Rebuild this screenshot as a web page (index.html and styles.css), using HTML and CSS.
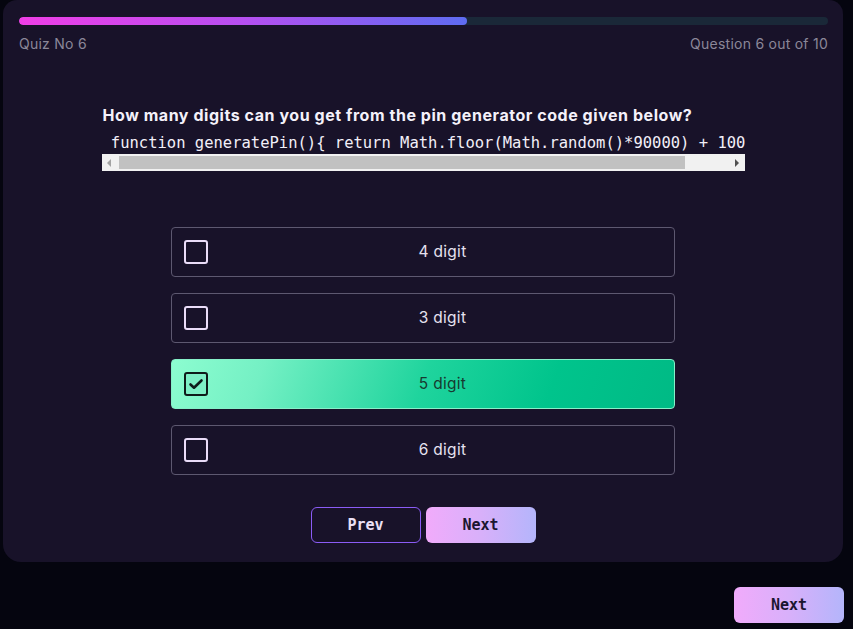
FILE: index.html
```html
<!DOCTYPE html>
<html lang="en">
<head>
<meta charset="utf-8">
<title>Quiz</title>
<link rel="stylesheet" href="styles.css">
</head>
<body>
<div class="page">
  <section class="card">
    <div class="progress"><div class="progress-fill" style="width: 55.4%"></div></div>
    <div class="meta">
      <span>Quiz No 6</span>
      <span>Question 6 out of 10</span>
    </div>
    <div class="question">
      <h2 class="q-title">How many digits can you get from the pin generator code given below?</h2>
      <div class="code-box">
        <pre class="code"> function generatePin(){ return Math.floor(Math.random()*90000) + 100</pre>
        <div class="scrollbar">
          <span class="arrow arrow-left"></span>
          <span class="track"><span class="thumb"></span></span>
          <span class="arrow arrow-right"></span>
        </div>
      </div>
    </div>
    <ul class="options">
      <li class="option"><span class="box"></span><span class="label">4 digit</span></li>
      <li class="option"><span class="box"></span><span class="label">3 digit</span></li>
      <li class="option selected"><span class="box"><svg viewBox="0 0 20 20" width="20" height="20"><path d="M4.5 10.5l3.5 3.2 7.5-7.2" fill="none" stroke="#0e1b1a" stroke-width="2.6" stroke-linecap="round" stroke-linejoin="round"/></svg></span><span class="label">5 digit</span></li>
      <li class="option"><span class="box"></span><span class="label">6 digit</span></li>
    </ul>
    <div class="nav">
      <button class="btn btn-outline">Prev</button>
      <button class="btn btn-fill">Next</button>
    </div>
  </section>
  <div class="footer">
    <button class="btn btn-fill">Next</button>
  </div>
</div>
</body>
</html>
```

FILE: styles.css
```css
* { box-sizing: border-box; }
html, body { margin: 0; padding: 0; }
body {
  background: #05050f;
  font-family: "Inter", "Noto Sans", sans-serif;
  width: 853px;
  height: 629px;
  overflow: hidden;
}
.page {
  padding: 0 9px 0 3px;
}
.card {
  background: #181229;
  border-radius: 14px 14px 18px 18px;
  padding: 17px 16px 19px 16px;
  width: 840px;
}
.progress {
  height: 8px;
  border-radius: 4px;
  background: #1a2838;
  overflow: hidden;
  margin-right: -1px;
}
.progress-fill {
  height: 100%;
  border-radius: 4px;
  background: linear-gradient(90deg, #ef3ee6 0%, #b64ff0 50%, #5e6cf2 100%);
}
.meta {
  display: flex;
  justify-content: space-between;
  margin-top: 9px;
  font-size: 14px;
  line-height: 20px;
  color: #8b8799;
  letter-spacing: 0.25px;
}
.meta span:last-child { margin-right: -1px; }
.question {
  width: 643px;
  margin: 49px auto 0;
}
.q-title {
  margin: 0;
  padding-left: 1px;
  font-size: 16px;
  line-height: 24px;
  font-weight: 700;
  color: #f4f1fa;
  letter-spacing: 0.55px;
}
.code-box {
  margin-top: 5px;
}
.code {
  margin: 0;
  font-family: "DejaVu Sans Mono", monospace;
  font-size: 15.5px;
  line-height: 22px;
  color: #f2eff8;
  white-space: pre;
  overflow: hidden;
}
.scrollbar {
  display: flex;
  align-items: center;
  height: 17px;
  background: #f1f1f1;
}
.arrow {
  width: 15px;
  height: 17px;
  display: flex;
  align-items: center;
  justify-content: center;
  flex: none;
}
.arrow::before {
  content: "";
  border-top: 4px solid transparent;
  border-bottom: 4px solid transparent;
}
.arrow-left::before { border-right: 4px solid #a3a3a3; }
.arrow-right::before { border-left: 4px solid #505050; }
.track {
  flex: 1;
  height: 13px;
  display: flex;
}
.thumb {
  width: 566px;
  height: 13px;
  background: #c1c1c1;
  margin-left: 2px;
}
.options {
  list-style: none;
  margin: 56px auto 0;
  padding: 0;
  width: 504px;
  display: flex;
  flex-direction: column;
  gap: 16px;
}
.option {
  display: flex;
  align-items: center;
  height: 50px;
  padding-left: 12px;
  border: 1px solid #5d5870;
  border-radius: 4px;
  color: #e6e2f0;
  font-size: 15.5px;
  letter-spacing: 0.3px;
}
.box {
  width: 24px;
  height: 24px;
  border: 2px solid #eadcf8;
  border-radius: 3px;
  flex: none;
  display: flex;
  align-items: center;
  justify-content: center;
}
.label {
  flex: 1;
  text-align: center;
  padding-left: 3px;
  margin-top: -2px;
}
.option.selected {
  border-color: #86f0c8;
  background: linear-gradient(110deg, #8cfdd0 0%, #74f0c4 18%, #1fd49d 50%, #00c48c 75%, #00ba85 100%);
  color: #173a30;
}
.option.selected .box {
  border-color: #0e1b1a;
  background: #7df0c6;
}
.nav {
  display: flex;
  justify-content: center;
  gap: 5px;
  margin-top: 32px;
}
.btn {
  width: 110px;
  height: 36px;
  border-radius: 6px;
  font-family: "DejaVu Sans Mono", "Liberation Mono", monospace;
  font-weight: 700;
  font-size: 15px;
  cursor: pointer;
}
.btn-outline {
  background: transparent;
  border: 1px solid #8b5cf6;
  color: #ebe0f5;
}
.btn-fill {
  border: none;
  background: linear-gradient(90deg, #f1abfb 0%, #d8b0fa 50%, #b4b5fb 100%);
  color: #1b1630;
}
.footer {
  display: flex;
  justify-content: flex-end;
  margin-top: 25px;
}
```
